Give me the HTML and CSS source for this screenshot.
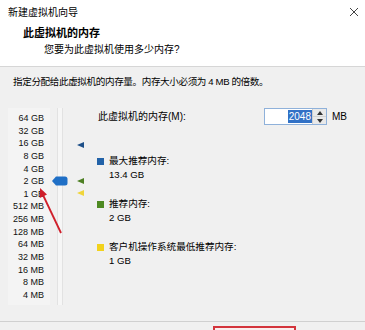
FILE: index.html
```html
<!DOCTYPE html>
<html lang="zh-CN">
<head>
  <meta charset="UTF-8" />
  <meta name="viewport" content="width=device-width, initial-scale=1.0" />
  <title>新建虚拟机向导</title>
  <link rel="stylesheet" href="styles.css">
</head>
<body>
  <div class="dialog">
    <div class="titlebar">
      <span class="title">新建虚拟机向导</span>
      <svg class="close" width="10" height="10" viewBox="0 0 10 10">
        <path d="M1 1 L9 9 M9 1 L1 9" stroke="#444" stroke-width="1" fill="none" />
      </svg>
    </div>

    <div class="header">
      <div class="heading">此虚拟机的内存</div>
      <div class="subheading">您要为此虚拟机使用多少内存?</div>
    </div>

    <div class="body">
      <p class="hint">指定分配给此虚拟机的内存量。内存大小必须为 4 MB 的倍数。</p>

      <div class="content">
        <div class="scale">
          <ul class="labels">
            <li>64 GB</li>
            <li>32 GB</li>
            <li>16 GB</li>
            <li>8 GB</li>
            <li>4 GB</li>
            <li>2 GB</li>
            <li>1 GB</li>
            <li>512 MB</li>
            <li>256 MB</li>
            <li>128 MB</li>
            <li>64 MB</li>
            <li>32 MB</li>
            <li>16 MB</li>
            <li>8 MB</li>
            <li>4 MB</li>
          </ul>
          <div class="track"></div>

          <svg class="thumb" width="16" height="10" viewBox="0 0 16 10">
            <path d="M0 5 L4 0.5 L13 0.5 Q15.5 0.5 15.5 3 L15.5 7 Q15.5 9.5 13 9.5 L4 9.5 Z" fill="#1f6fc6" />
          </svg>
          <span class="mark mark-max"></span>
          <span class="mark mark-rec"></span>
          <span class="mark mark-min"></span>

          <svg class="arrow" width="40" height="56" viewBox="0 0 40 56">
            <line x1="31" y1="50" x2="13" y2="12" stroke="#cf1f2b" stroke-width="1.8" />
            <polygon points="10,5 17,11.5 9.8,15" fill="#cf1f2b" />
          </svg>
        </div>

        <div class="settings">
          <div class="field-row">
            <label class="field-label">此虚拟机的内存(M):</label>
            <div class="spin">
              <span class="spin-value"><span class="selected">2048</span></span>
              <span class="spin-buttons">
                <span class="spin-btn"><svg width="6" height="4" viewBox="0 0 6 4"><path d="M0 4 L3 0 L6 4 Z" fill="#333" /></svg></span>
                <span class="spin-btn"><svg width="6" height="4" viewBox="0 0 6 4"><path d="M0 0 L3 4 L6 0 Z" fill="#333" /></svg></span>
              </span>
            </div>
            <span class="unit">MB</span>
          </div>

          <div class="legend">
            <div class="legend-item">
              <div class="legend-title"><span class="swatch swatch-max"></span>最大推荐内存:</div>
              <div class="legend-value">13.4 GB</div>
            </div>
            <div class="legend-item">
              <div class="legend-title"><span class="swatch swatch-rec"></span>推荐内存:</div>
              <div class="legend-value">2 GB</div>
            </div>
            <div class="legend-item">
              <div class="legend-title"><span class="swatch swatch-min"></span>客户机操作系统最低推荐内存:</div>
              <div class="legend-value">1 GB</div>
            </div>
          </div>
        </div>
      </div>
    </div>

    <div class="footer">
      <div class="highlight"></div>
    </div>
  </div>
</body>
</html>
```

FILE: styles.css
```css
html, body {
  margin: 0;
  padding: 0;
}
body {
  background: #f0f0f0;
  font-family: "Liberation Sans", "Noto Sans CJK SC", sans-serif;
  font-size: 10px;
  color: #000;
}
.dialog {
  width: 365px;
  height: 330px;
  overflow: hidden;
  background: #f0f0f0;
}

/* title bar */
.titlebar {
  height: 26px;
  background: #fff;
  display: flex;
  align-items: center;
  justify-content: space-between;
  padding: 0 6px 0 8px;
}
.title {
  line-height: 14px;
  margin-top: -1px;
}
.close {
  display: block;
  margin-top: -3px;
}

/* header */
.header {
  background: #fff;
  padding: 0 0 9px 0;
  border-bottom: 1px solid #d6d6d6;
}
.heading {
  font-weight: bold;
  font-size: 11px;
  line-height: 14px;
  padding-left: 23px;
}
.subheading {
  line-height: 14px;
  margin-top: 3px;
  padding-left: 44px;
}

/* body */
.body {
  height: 254px;
}
.hint {
  margin: 0;
  padding: 8px 0 0 13px;
  line-height: 14px;
  font-size: 9.6px;
  letter-spacing: -0.4px;
}
.content {
  display: grid;
  grid-template-columns: 97px 1fr;
  margin-top: 19px;
}

/* slider scale */
.scale {
  position: relative;
  display: flex;
  height: 197px;
}
.labels {
  list-style: none;
  margin: 0 0 0 8px;
  padding: 4px 6px 0 0;
  width: 36px;
  background: #f4f4f4;
  font-size: 9px;
  text-align: right;
  color: #111;
}
.labels li {
  height: 12.64px;
  line-height: 12.64px;
  white-space: nowrap;
}
.track {
  width: 4px;
  margin-left: 7px;
  background: #f6f6f6;
  border-left: 1px solid #e2e2e2;
  border-right: 1px solid #e2e2e2;
}
.thumb {
  position: absolute;
  left: 52px;
  top: 68px;
}
.mark {
  position: absolute;
  left: 77px;
  width: 0;
  height: 0;
  border-top: 3.5px solid transparent;
  border-bottom: 3.5px solid transparent;
  border-right: 7px solid;
}
.mark-max {
  top: 34px;
  border-right-color: #1d4f88;
}
.mark-rec {
  top: 69.5px;
  border-right-color: #4d7f23;
}
.mark-min {
  top: 81.5px;
  border-right-color: #f0d53a;
}
.arrow {
  position: absolute;
  left: 30px;
  top: 75px;
}

/* right column */
.field-row {
  display: flex;
  align-items: center;
  height: 17px;
}
.field-label {
  width: 166px;
  padding-left: 1px;
  line-height: 14px;
}
.spin {
  display: flex;
  width: 63px;
  height: 17px;
  box-sizing: border-box;
  border: 1px solid #8fb1da;
  background: #fff;
}
.spin-value {
  flex: 1;
  display: flex;
  justify-content: flex-end;
  align-items: center;
}
.selected {
  background: #3171c6;
  color: #fff;
  line-height: 13px;
  padding: 0 1px;
}
.spin-buttons {
  width: 13px;
  display: flex;
  flex-direction: column;
  background: #e9e9e9;
  border-left: 1px solid #cfcfcf;
}
.spin-btn {
  flex: 1;
  display: flex;
  align-items: center;
  justify-content: center;
}
.spin-btn + .spin-btn {
  border-top: 1px solid #d4d4d4;
}
.unit {
  margin-left: 5px;
}

.legend {
  margin-top: 29px;
  font-size: 9.6px;
}
.legend-item {
  line-height: 14px;
}
.legend-item + .legend-item {
  margin-top: 15px;
}
.legend-title {
  display: flex;
  align-items: center;
}
.legend-value {
  padding-left: 12px;
}
.swatch {
  width: 7px;
  height: 7px;
  margin-right: 5px;
}
.swatch-max { background: #2262a8; }
.swatch-rec { background: #4e8a22; }
.swatch-min { background: #f2d21c; }

/* footer */
.footer {
  border-top: 1px solid #d0d0d0;
  height: 20px;
  padding-top: 4px;
  box-sizing: border-box;
}
.highlight {
  margin-left: 213px;
  width: 83px;
  height: 20px;
  box-sizing: border-box;
  border: 2px solid #d3343c;
  background: #f9eeee;
}
```
